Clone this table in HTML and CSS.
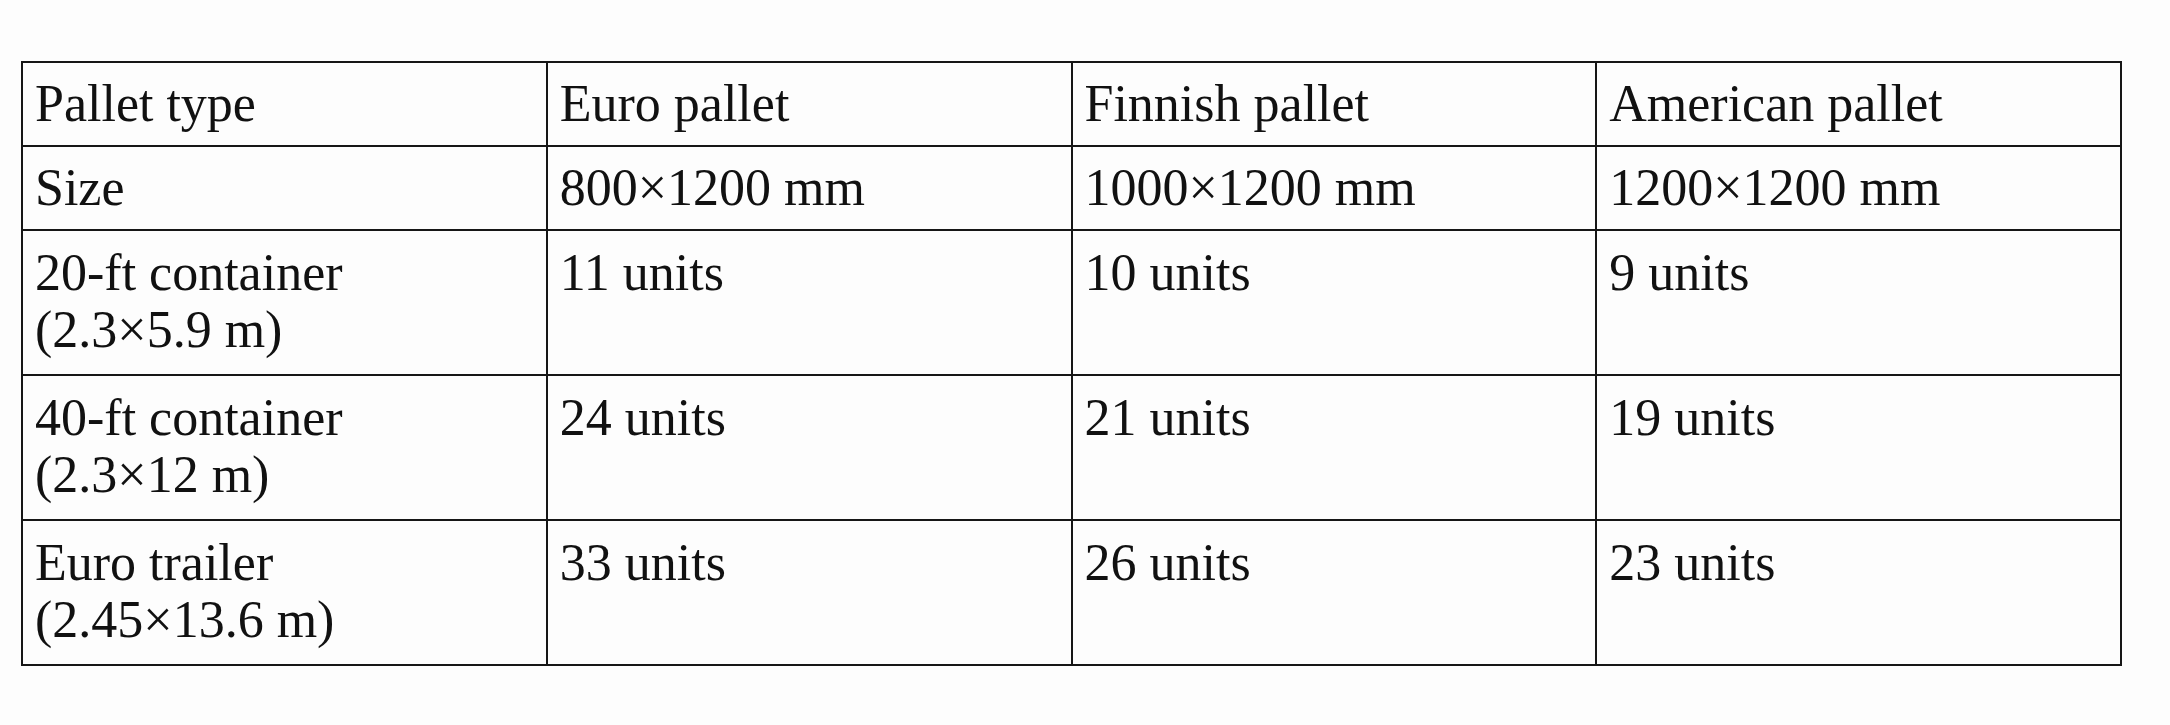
FILE: index.html
```html
<!DOCTYPE html>
<html lang="en">
<head>
<meta charset="utf-8">
<title>Pallet types</title>
<link rel="stylesheet" href="styles.css">
</head>
<body>
<table class="pallets">
  <colgroup>
    <col class="c"><col class="c"><col class="c"><col class="c">
  </colgroup>
  <tbody>
    <tr class="r1">
      <td>Pallet type</td>
      <td>Euro pallet</td>
      <td>Finnish pallet</td>
      <td>American pallet</td>
    </tr>
    <tr class="r1">
      <td>Size</td>
      <td>800×1200 mm</td>
      <td>1000×1200 mm</td>
      <td>1200×1200 mm</td>
    </tr>
    <tr class="r2">
      <td>20-ft container<br>(2.3×5.9 m)</td>
      <td>11 units</td>
      <td>10 units</td>
      <td>9 units</td>
    </tr>
    <tr class="r2">
      <td>40-ft container<br>(2.3×12 m)</td>
      <td>24 units</td>
      <td>21 units</td>
      <td>19 units</td>
    </tr>
    <tr class="r2">
      <td>Euro trailer<br>(2.45×13.6 m)</td>
      <td>33 units</td>
      <td>26 units</td>
      <td>23 units</td>
    </tr>
  </tbody>
</table>
</body>
</html>
```
FILE: styles.css
```css
html, body {
  margin: 0;
  padding: 0;
  background: #fdfdfd;
}

body {
  padding: 61px 0 0 21px;
  font-family: "Liberation Serif", "Times New Roman", serif;
  color: #111;
}

.pallets {
  border-collapse: collapse;
  table-layout: fixed;
  width: 2101px;
}

.pallets .c {
  width: 25%;
}

.pallets td {
  border: 2px solid #161616;
  font-size: 52px;
  padding: 0 12px;
  vertical-align: top;
  text-align: left;
  white-space: nowrap;
}

.pallets .r1 td {
  line-height: 60px;
  padding-top: 11px;
  padding-bottom: 11px;
}

.pallets .r2 td {
  line-height: 57px;
  padding-top: 13px;
  padding-bottom: 16px;
}
```
